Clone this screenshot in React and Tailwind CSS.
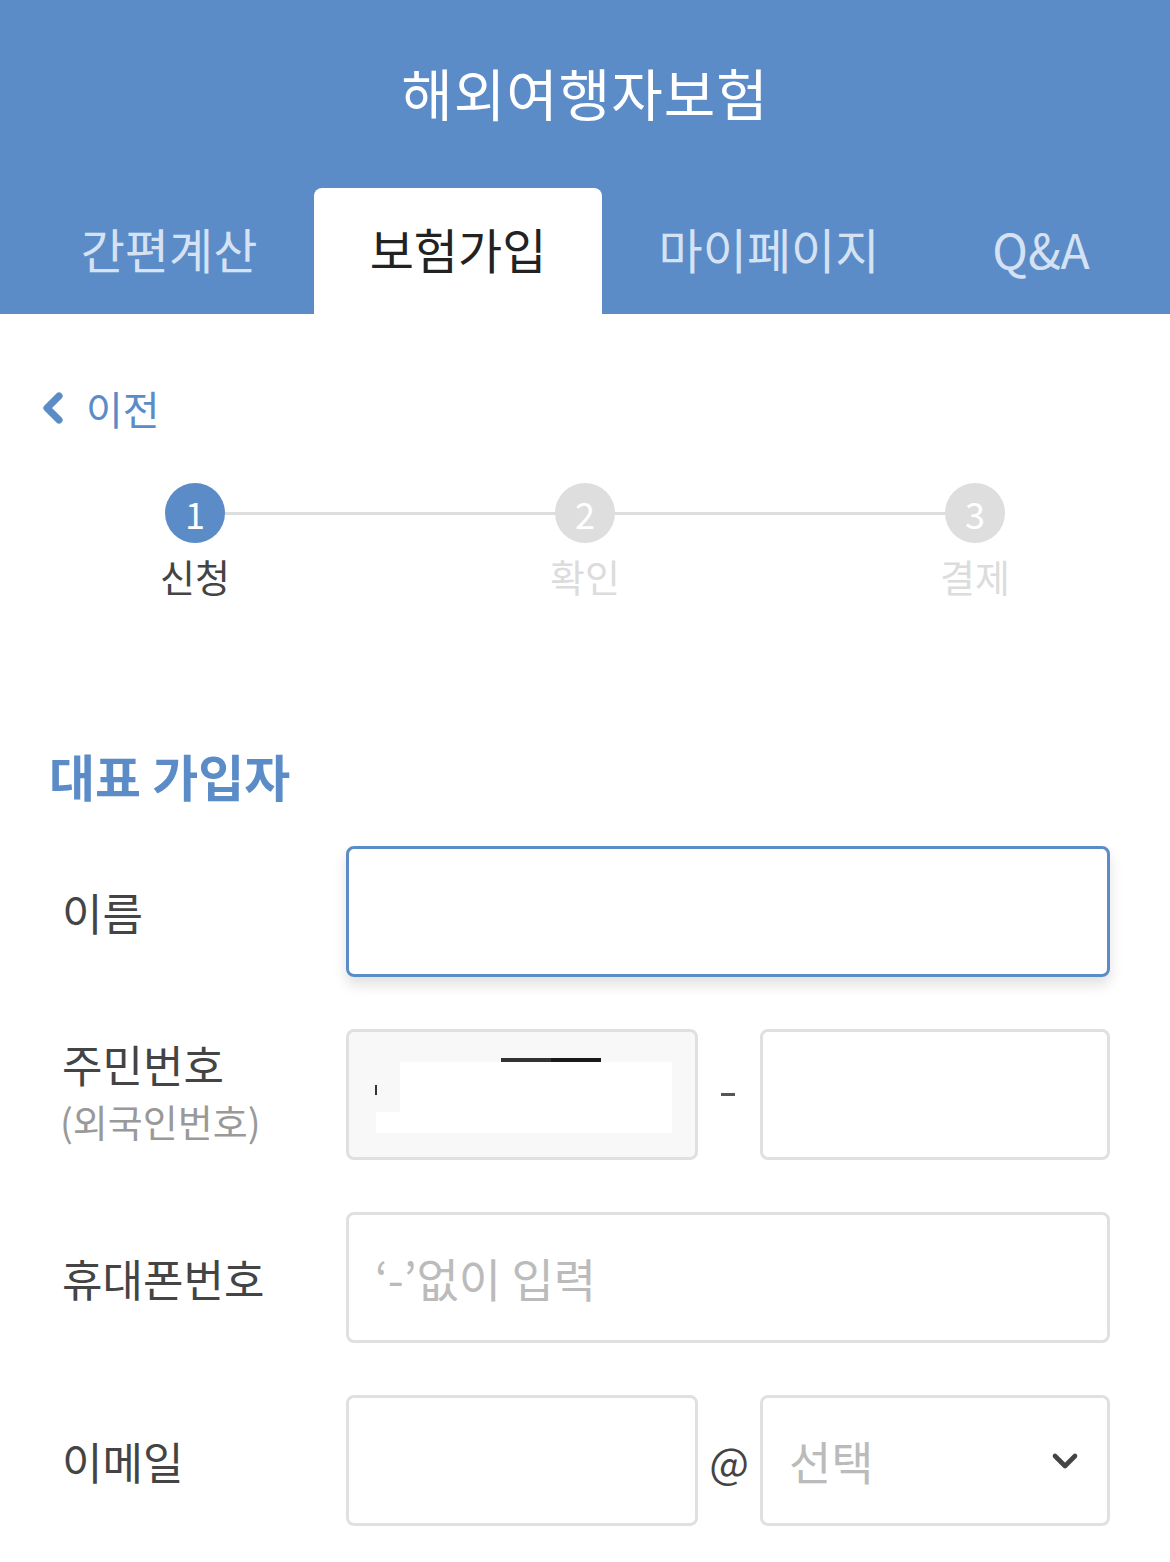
import { ChevronLeft, ChevronDown } from 'lucide-react'

const FONT = { fontFamily: '"Noto Sans CJK KR", "Noto Sans", sans-serif' }

const TABS = [
  { label: '간편계산', width: 'w-[290px]' },
  { label: '보험가입', width: 'w-[288px]', active: true },
  { label: '마이페이지', width: 'w-[334px]' },
  { label: 'Q&A', width: 'w-[210px]' },
]

const STEPS = [
  { n: 1, label: '신청', active: true },
  { n: 2, label: '확인' },
  { n: 3, label: '결제' },
]

function Box({ className = '', children }) {
  return (
    <div className={`h-[131px] rounded-[8px] border-[3px] border-[#e0e0e0] ${className}`}>
      {children}
    </div>
  )
}

function Row({ label, sub, children }) {
  return (
    <div className="flex items-center">
      <div className={`w-[346px] pl-[62px] shrink-0 ${sub ? 'pb-[8px]' : ''}`}>
        <p className="text-[44px] leading-[54px] text-[#444]">{label}</p>
        {sub && <p className="text-[38px] leading-[48px] text-[#999] -ml-[2px] mt-[6px]">{sub}</p>}
      </div>
      <div className="flex-1 pr-[60px] flex items-center">{children}</div>
    </div>
  )
}

export default function App() {
  return (
    <div className="w-[1170px] min-h-[1562px] bg-white" style={FONT}>
      {/* header */}
      <header className="bg-[#5b8cc8] h-[314px] flex flex-col">
        <h1 className="text-white text-[56px] leading-none text-center pt-[64px] tracking-[1px]">해외여행자보험</h1>
        <nav className="mt-auto flex pl-[24px] h-[126px]">
          {TABS.map(t => (
            <div
              key={t.label}
              className={`${t.width} flex items-center justify-center pb-[6px] text-[48px] ${t.active ? 'bg-white text-[#222] rounded-t-[8px]' : 'text-[#d5e2f3]'}`}
            >
              {t.label}
            </div>
          ))}
        </nav>
      </header>

      {/* back link */}
      <div className="flex items-center pl-[29px] pt-[70px] text-[#5b8cc8]">
        <ChevronLeft size={48} strokeWidth={3.6} />
        <span className="text-[40px] leading-none ml-[9px]">이전</span>
      </div>

      {/* stepper */}
      <div className="relative mt-[51px] px-[165px]">
        <div className="absolute left-[195px] right-[195px] top-[29px] h-[3px] bg-[#dedede]" />
        <div className="relative flex justify-between">
          {STEPS.map(s => (
            <div key={s.n} className="flex flex-col items-center w-[60px]">
              <div className={`w-[60px] h-[60px] rounded-full flex items-center justify-center text-white text-[36px] ${s.active ? 'bg-[#5b8cc8]' : 'bg-[#dedede]'}`}>
                {s.n}
              </div>
              <span className={`mt-[14px] text-[38px] leading-none whitespace-nowrap ${s.active ? 'text-[#444]' : 'text-[#dcdcdc]'}`}>{s.label}</span>
            </div>
          ))}
        </div>
      </div>

      {/* section */}
      <h2 className="mt-[155px] pl-[49px] text-[50px] leading-none font-bold text-[#5b8cc8]">대표 가입자</h2>

      <div className="mt-[46px] flex flex-col gap-[52px]">
        <Row label="이름">
          <div className="flex-1 h-[131px] rounded-[8px] border-[3px] border-[#5b8cc8] shadow-[0_8px_14px_rgba(0,0,0,0.12)]" />
        </Row>

        <Row label="주민번호" sub="(외국인번호)">
          <Box className="w-[352px] bg-[#f8f8f8] relative">
            <div className="absolute left-[152px] top-[26px] w-[50px] h-[4px] bg-[#333]" />
            <div className="absolute left-[202px] top-[26px] w-[50px] h-[4px] bg-[#1a1a1a]" />
            <div className="absolute left-[51px] top-[30px] w-[272px] h-[71px] bg-white" />
            <div className="absolute left-[27px] top-[80px] w-[24px] h-[21px] bg-white" />
            <div className="absolute left-[26px] top-[53px] w-[2px] h-[10px] bg-[#333]" />
          </Box>
          <div className="w-[62px] flex justify-center">
            <div className="w-[14px] h-[3px] bg-[#555] -ml-[2px]" />
          </div>
          <Box className="flex-1" />
        </Row>

        <Row label="휴대폰번호">
          <Box className="flex-1 flex items-center pl-[26px] text-[46px] text-[#bbb]">‘-’없이 입력</Box>
        </Row>

        <Row label="이메일">
          <Box className="w-[352px]" />
          <span className="w-[62px] text-center text-[42px] text-[#444]">@</span>
          <Box className="flex-1 flex items-center justify-between pl-[26px] pr-[22px] text-[46px] text-[#bbb]">
            <span>선택</span>
            <ChevronDown size={40} strokeWidth={2.8} className="text-[#444]" />
          </Box>
        </Row>
      </div>
    </div>
  )
}
